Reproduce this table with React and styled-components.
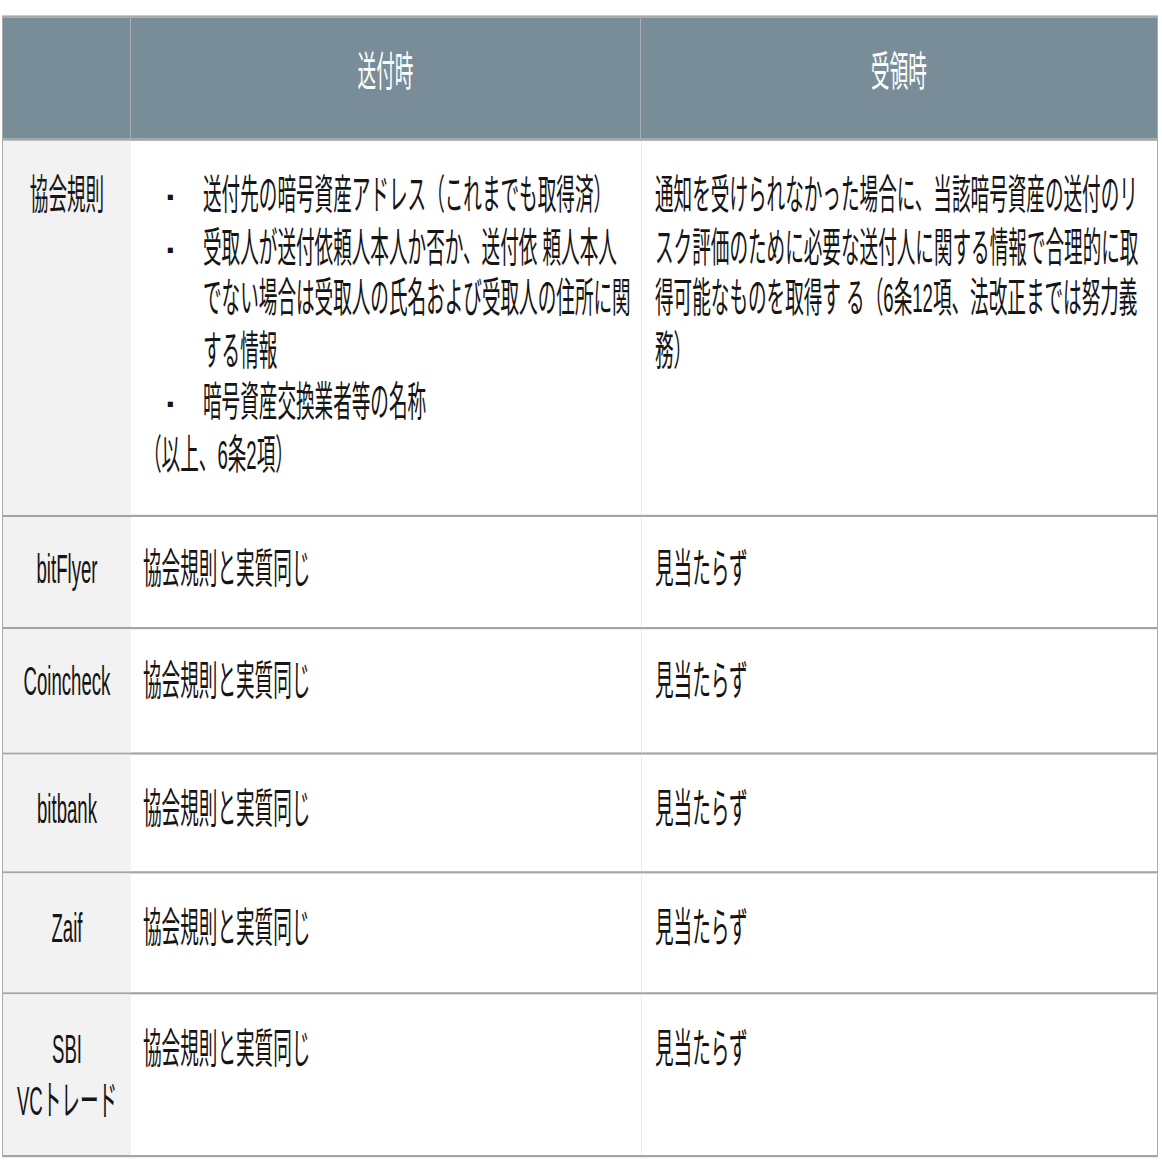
import React from "react";
import styled, { createGlobalStyle } from "styled-components";

// the reference is stretched vertically, so the table is laid out at its
// natural size and then stretched by this factor
const STRETCH = 2.2;

const GlobalStyle = createGlobalStyle`
  html, body {
    margin: 0;
    padding: 0;
    background: #fff;
  }
  body {
    font-family: "Liberation Sans", "Noto Sans CJK JP", sans-serif;
    color: #151515;
  }
`;

const Page = styled.div`
  width: 1162px;
  height: 1162px;
  overflow: hidden;
`;

const Stretch = styled.div`
  transform: scaleY(${STRETCH});
  transform-origin: top left;
  padding: ${16 / STRETCH}px 0 0 2px;
`;

const Table = styled.div`
  width: 1156px;
  box-sizing: border-box;
  border-top: 1px solid #a7a7a7;
  border-left: 1px solid #ababab;
  border-right: 1px solid #ababab;
  font-size: 18.6px;
  line-height: ${52 / STRETCH}px;
`;

const Row = styled.div`
  display: grid;
  grid-template-columns: 128px 510px 1fr;
  height: ${(p) => p.$h / STRETCH}px;
  box-sizing: border-box;
  border-bottom: 1px solid #a5a5a5;
`;

const HeadCell = styled.div`
  background: #788d98;
  color: #fff;
  display: flex;
  align-items: center;
  justify-content: center;
  padding-bottom: 5px;
  border-right: ${(p) => (p.$last ? "none" : "1px solid #a7afb4")};
`;

const LabelCell = styled.div`
  background: #f2f2f2;
  text-align: center;
  padding-top: ${28 / STRETCH}px;
`;

const Cell = styled.div`
  padding: ${28 / STRETCH}px 12px 0 ${(p) => (p.$wide ? 13 : 12)}px;
  border-left: ${(p) => (p.$wide ? "1px solid #ececec" : "none")};
  white-space: nowrap;
`;

const Bullets = styled.ul`
  list-style: none;
  margin: 0;
  padding: 0 0 0 24px;
`;

const Bullet = styled.li`
  display: flex;
`;

const Dash = styled.span`
  flex: none;
  width: 36px;
  font-weight: bold;
  font-size: 20px;
`;

const rules = [
  ["送付先の暗号資産アドレス（これまでも取得済）"],
  [
    "受取人が送付依頼人本人か否か、送付依 頼人本人",
    "でない場合は受取人の氏名および受取人の住所に関",
    "する情報",
  ],
  ["暗号資産交換業者等の名称"],
];

const received = [
  "通知を受けられなかった場合に、当該暗号資産の送付のリ",
  "スク評価のために必要な送付人に関する情報で合理的に取",
  "得可能なものを取得す る（6条12項、法改正までは努力義",
  "務）",
];

const exchanges = [
  { name: ["bitFlyer"], h: 112 },
  { name: ["Coincheck"], h: 126 },
  { name: ["bitbank"], h: 120 },
  { name: ["Zaif"], h: 121 },
  { name: ["SBI", "VCトレード"], h: 162 },
];

const Lines = ({ lines }) =>
  lines.map((l, i) => (
    <React.Fragment key={i}>
      {i > 0 && <br />}
      {l}
    </React.Fragment>
  ));

export default function App() {
  return (
    <Page>
      <GlobalStyle />
      <Stretch>
        <Table>
          <Row $h={123}>
            <HeadCell />
            <HeadCell>送付時</HeadCell>
            <HeadCell $last>受領時</HeadCell>
          </Row>

          <Row $h={375}>
            <LabelCell>協会規則</LabelCell>
            <Cell>
              <Bullets>
                {rules.map((lines, i) => (
                  <Bullet key={i}>
                    <Dash>-</Dash>
                    <span>
                      <Lines lines={lines} />
                    </span>
                  </Bullet>
                ))}
              </Bullets>
              （以上、6条2項）
            </Cell>
            <Cell $wide>
              <Lines lines={received} />
            </Cell>
          </Row>

          {exchanges.map((ex) => (
            <Row key={ex.name[0]} $h={ex.h}>
              <LabelCell>
                <Lines lines={ex.name} />
              </LabelCell>
              <Cell>協会規則と実質同じ</Cell>
              <Cell $wide>見当たらず</Cell>
            </Row>
          ))}
        </Table>
      </Stretch>
    </Page>
  );
}
